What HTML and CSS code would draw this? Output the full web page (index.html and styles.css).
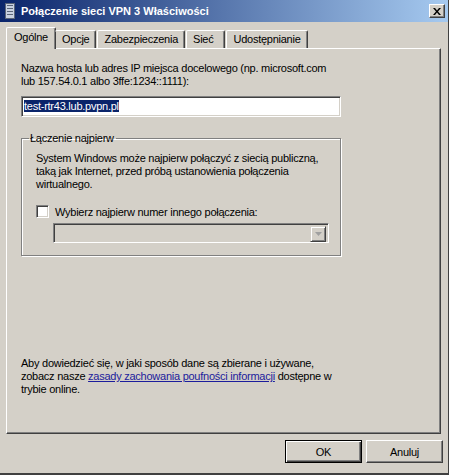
FILE: index.html
```html
<!DOCTYPE html>
<html lang="pl">
<head>
    <meta charset="UTF-8">
    <title>Połączenie sieci VPN 3 Właściwości</title>
    <link rel="stylesheet" href="styles.css">
</head>
<body>
    <div class="window">
        <div class="titlebar">
            <svg class="title-icon" width="10" height="16" viewBox="0 0 10 16">
                <rect x="0.5" y="0.5" width="9" height="15" fill="#c8d0e0" stroke="#5a6478"/>
                <rect x="2" y="2" width="6" height="1" fill="#5a6478"/>
                <rect x="2" y="5" width="6" height="1" fill="#5a6478"/>
                <rect x="2" y="8" width="6" height="1" fill="#5a6478"/>
                <rect x="2" y="11" width="6" height="1" fill="#5a6478"/>
            </svg>
            <span class="title-text">Połączenie sieci VPN 3 Właściwości</span>
            <button class="close-btn">
                <svg width="8" height="7" viewBox="0 0 8 7">
                    <path d="M0 0h2l2 2.5L6 0h2L5 3.5 8 7H6L4 4.5 2 7H0l3-3.5z" fill="#000"/>
                </svg>
            </button>
        </div>

        <div class="tabs">
            <div class="tab active">Ogólne</div>
            <div class="tab">Opcje</div>
            <div class="tab">Zabezpieczenia</div>
            <div class="tab tab-wide">Sieć</div>
            <div class="tab">Udostępnianie</div>
        </div>

        <div class="panel">
            <p class="label">Nazwa hosta lub adres IP miejsca docelowego (np. microsoft.com<br>lub 157.54.0.1 albo 3ffe:1234::1111):</p>
            <div class="textbox"><span class="selected">test-rtr43.lub.pvpn.pl</span></div>

            <fieldset class="group">
                <legend>Łączenie najpierw</legend>
                <p class="group-text">System Windows może najpierw połączyć z siecią publiczną,<br>taką jak Internet, przed próbą ustanowienia połączenia<br>wirtualnego.</p>
                <label class="check-row">
                    <span class="checkbox"></span>
                    <span>Wybierz najpierw numer innego połączenia:</span>
                </label>
                <div class="combo">
                    <span class="combo-btn">
                        <svg width="7" height="4" viewBox="0 0 7 4"><path d="M0 0h7L3.5 4z" fill="#a0a0a0"/></svg>
                    </span>
                </div>
            </fieldset>

            <p class="privacy">Aby dowiedzieć się, w jaki sposób dane są zbierane i używane,<br>zobacz nasze <a href="#">zasady zachowania poufności informacji</a> dostępne w<br>trybie online.</p>
        </div>

        <div class="buttons">
            <button class="btn btn-default">OK</button>
            <button class="btn">Anuluj</button>
        </div>
    </div>
</body>
</html>
```

FILE: styles.css
```css
/* Classic Windows dialog */
body {
    margin: 0;
    background-color: #d4d0c8;
    font-family: "Liberation Sans", Arial, sans-serif;
    font-size: 11px;
    letter-spacing: -0.25px;
    color: #000;
}

.window {
    width: 449px;
    height: 475px;
    box-sizing: border-box;
    border-right: 1px solid #404040;
    border-bottom: 2px solid #404040;
    display: flex;
    flex-direction: column;
}

.titlebar {
    height: 22px;
    display: flex;
    align-items: center;
    padding: 0 3px 0 5px;
    background: linear-gradient(to right, #0a246a, #a6caf0);
}

.title-icon {
    margin-right: 6px;
}

.title-text {
    flex: 1;
    color: #fff;
    font-weight: bold;
    font-size: 11px;
    letter-spacing: 0;
}

.close-btn {
    width: 16px;
    height: 14px;
    padding: 0;
    display: flex;
    align-items: center;
    justify-content: center;
    background-color: #d4d0c8;
    border: 1px solid;
    border-color: #fff #404040 #404040 #fff;
    box-shadow: inset -1px -1px 0 #808080;
}

/* Tab strip */
.tabs {
    display: flex;
    align-items: flex-end;
    height: 27px;
    padding-left: 8px;
    margin-bottom: -1px;
    position: relative;
    z-index: 1;
}

.tab {
    height: 18px;
    line-height: 17px;
    padding: 0 6px;
    margin-right: 1px;
    box-sizing: border-box;
    border: 1px solid #fff;
    border-bottom: none;
    border-right: 1px solid #404040;
    box-shadow: inset -1px 0 0 #808080;
    border-radius: 2px 2px 0 0;
    margin-bottom: 1px;
}

.tab-wide {
    padding-right: 11px;
}

.tab.active {
    height: 22px;
    line-height: 19px;
    padding: 0 7px;
    margin: 0 -1px 0 -2px;
    background-color: #d4d0c8;
}

.tab.active + .tab {
    border-left: none;
    padding-left: 7px;
}

/* Page area */
.panel {
    height: 386px;
    margin: 0 7px 0 6px;
    box-sizing: border-box;
    border: 1px solid;
    border-color: #fff #404040 #404040 #fff;
    box-shadow: inset -1px -1px 0 #808080;
    padding: 13px 14px 0 14px;
    display: flex;
    flex-direction: column;
}

.label {
    margin: 0;
    line-height: 13px;
}

.textbox {
    margin-top: 8px;
    width: 320px;
    height: 21px;
    box-sizing: border-box;
    background-color: #fff;
    border: 1px solid;
    border-color: #808080 #fff #fff #808080;
    box-shadow: inset 1px 1px 0 #404040, inset -1px -1px 0 #d4d0c8;
    padding: 3px 0 0 2px;
    line-height: 13px;
}

.selected {
    background-color: #0a246a;
    color: #fff;
}

.group {
    margin: 15px 0 0 0;
    width: 320px;
    height: 124px;
    box-sizing: border-box;
    border: 1px solid #808080;
    box-shadow: 1px 1px 0 #fff, inset 1px 1px 0 #fff;
    padding: 8px 8px 0 14px;
    white-space: nowrap;
}

.group legend {
    padding: 0 2px 0 1px;
    margin-left: -7px;
}

.group-text {
    margin: 0;
    line-height: 13px;
}

.check-row {
    display: flex;
    align-items: center;
    margin-top: 14px;
}

.checkbox {
    width: 13px;
    height: 13px;
    box-sizing: border-box;
    background-color: #fff;
    border: 1px solid;
    border-color: #808080 #fff #fff #808080;
    box-shadow: inset 1px 1px 0 #404040, inset -1px -1px 0 #d4d0c8;
    margin-right: 6px;
}

.combo {
    margin: 5px 3px 0 17px;
    height: 20px;
    box-sizing: border-box;
    border: 1px solid;
    border-color: #808080 #fff #fff #808080;
    box-shadow: inset 1px 1px 0 #404040, inset -1px -1px 0 #d4d0c8;
    display: flex;
    justify-content: flex-end;
    padding: 2px;
}

.combo-btn {
    width: 16px;
    height: 16px;
    box-sizing: border-box;
    border: 1px solid;
    border-color: #d4d0c8 #404040 #404040 #d4d0c8;
    box-shadow: inset 1px 1px 0 #fff, inset -1px -1px 0 #808080;
    display: flex;
    align-items: center;
    justify-content: center;
}

.privacy {
    margin: auto 0 37px 0;
    line-height: 13px;
}

.privacy a {
    color: #1c1c9c;
}

/* Dialog buttons */
.buttons {
    display: flex;
    justify-content: flex-end;
    gap: 4px;
    padding: 6px 5px 0 0;
}

.btn {
    width: 77px;
    height: 23px;
    font-family: inherit;
    font-size: 11px;
    letter-spacing: -0.25px;
    background-color: #d4d0c8;
    border: 1px solid;
    border-color: #fff #404040 #404040 #fff;
    box-shadow: inset -1px -1px 0 #808080;
    padding: 0;
}

.btn-default {
    border: 1px solid #000;
    box-shadow: inset 1px 1px 0 #fff, inset -1px -1px 0 #404040, inset -2px -2px 0 #808080;
}
```
